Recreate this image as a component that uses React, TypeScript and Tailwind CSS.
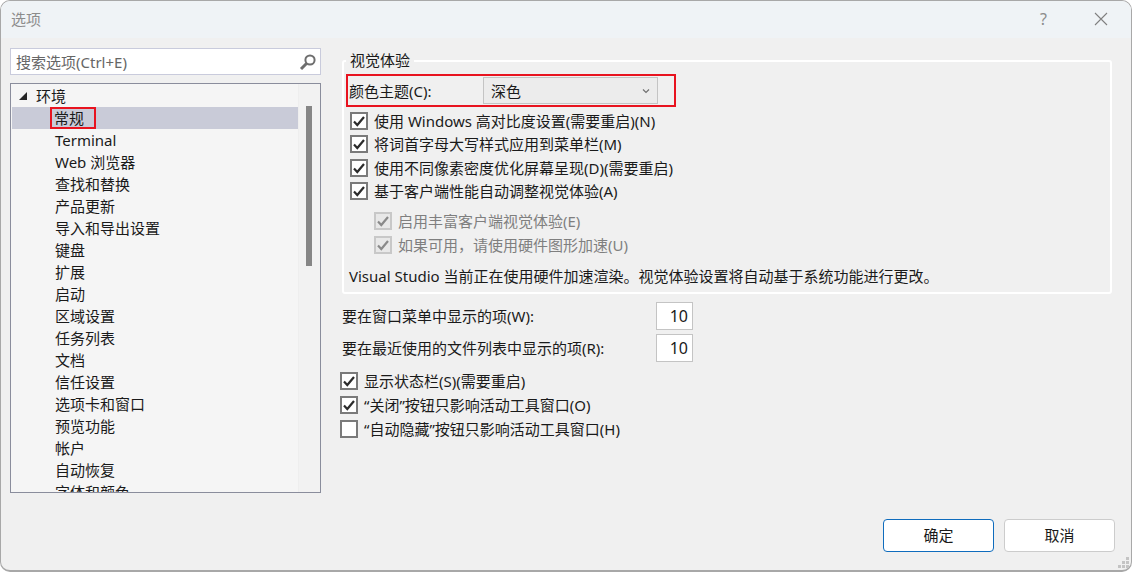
import React from "react";

const treeItems = ["Terminal", "Web 浏览器", "查找和替换", "产品更新", "导入和导出设置", "键盘", "扩展", "启动", "区域设置", "任务列表", "文档", "信任设置", "选项卡和窗口", "预览功能", "帐户", "自动恢复", "字体和颜色"];

function Check({ checked = true, disabled = false }: { checked?: boolean; disabled?: boolean }) {
  return (
    <span className={`flex h-[18px] w-[18px] shrink-0 items-center justify-center border-2 ${disabled ? "border-[#c8c8c8] bg-[#e8e8e8]" : "border-[#7a7a7a] bg-white"}`}>
      {checked && (
        <svg width="14" height="14" viewBox="0 0 14 14" fill="none">
          <path d="M2 7.5 L5.3 11 L12 3" stroke={disabled ? "#8a8a8a" : "#2b2b2b"} strokeWidth="2.2" />
        </svg>
      )}
    </span>
  );
}

function CheckRow({ label, checked = true, disabled = false, className = "" }: { label: string; checked?: boolean; disabled?: boolean; className?: string }) {
  return (
    <div className={`flex items-center gap-[6px] ${className}`}>
      <Check checked={checked} disabled={disabled} />
      <span className={disabled ? "text-[#7f7f7f]" : ""}>{label}</span>
    </div>
  );
}

function NumberRow({ label }: { label: string }) {
  return (
    <div className="flex h-[28px] items-center justify-between">
      <span>{label}</span>
      <span className="flex h-[28px] w-[37px] items-center justify-end border border-[#c4c4c4] bg-white pr-[4px] text-[16px]">10</span>
    </div>
  );
}

export default function App() {
  return (
    <div className="relative flex h-[572px] w-[1132px] flex-col overflow-hidden rounded-[10px] border border-b-2 border-[#a8a8a8] bg-[#f0f0f0] text-[15px] leading-[22px] text-[#1a1a1a] [font-family:'Noto_Sans','Noto_Sans_CJK_SC',sans-serif]">
      <div className="flex h-[37px] shrink-0 items-center justify-between bg-[#eff3f6] pb-[2px] pl-[10px] pr-[23px]">
        <span className="text-[#8c8c8c]">选项</span>
        <div className="flex items-center gap-[47px]">
          <span className="text-[16px] text-[#8c8c8c]">?</span>
          <svg width="14" height="14" viewBox="0 0 14 14" fill="none">
            <path d="M1 1 L13 13 M13 1 L1 13" stroke="#808080" strokeWidth="1.1" />
          </svg>
        </div>
      </div>

      <div className="flex flex-1 pl-[9px] pt-[10px]">
        <div className="flex w-[311px] shrink-0 flex-col gap-[8px]">
          <div className="flex h-[27px] items-center justify-between border border-[#c9cbdc] bg-white pl-[5px] pr-[3px] text-[#666]">
            <span>搜索选项(Ctrl+E)</span>
            <svg width="18" height="18" viewBox="0 0 18 18" fill="none">
              <circle cx="11" cy="7" r="4.6" stroke="#6e6e6e" strokeWidth="2" />
              <path d="M7.5 10.5 L2 16" stroke="#6e6e6e" strokeWidth="3" />
            </svg>
          </div>
          <div className="flex h-[410px] overflow-hidden border border-[#8a8d9c] bg-[#f5f5f5]">
            <div className="flex-1 overflow-hidden pl-px pt-[1px]">
              <div className="flex h-[22px] items-center pl-[7px]">
                <svg width="8" height="8" viewBox="0 0 8 8" className="mr-[9px]">
                  <path d="M8 0 V8 H0 Z" fill="#262626" />
                </svg>
                <span>环境</span>
              </div>
              <div className="flex h-[22px] items-center bg-[#c9cbd8] pl-[38px]">
                <span className="flex h-[22px] items-center border-2 border-[#e8131f] pl-[2px] pr-[10px] leading-none">常规</span>
              </div>
              {treeItems.map((t) => (
                <div key={t} className="flex h-[22px] items-center pl-[43px]">{t}</div>
              ))}
            </div>
            <div className="w-[22px] shrink-0 border-l border-[#eeeeee] bg-[#f2f2f2] pl-[7px] pt-[22px]">
              <div className="h-[160px] w-[6px] bg-[#868686]" />
            </div>
          </div>
        </div>

        <div className="ml-[21px] w-[770px] shrink-0 pt-[12px]">
          <div className="relative h-[234px] rounded-[3px] border-2 border-white px-[2px] pt-[12px]">
            <span className="absolute -top-[13px] left-[2px] bg-[#f0f0f0] px-[4px]">视觉体验</span>
            <div className="flex h-[33px] w-[330px] items-center justify-between border-2 border-[#e8131f] pl-[1px] pr-[16px]">
              <span>颜色主题(C):</span>
              <div className="flex h-[27px] w-[175px] items-center justify-between border border-[#c4c4c4] bg-[#ececec] pl-[7px] pr-[6px]">
                <span>深色</span>
                <svg width="10" height="10" viewBox="0 0 10 10" fill="none">
                  <path d="M2 3.5 L5 6.5 L8 3.5" stroke="#707070" strokeWidth="1.2" />
                </svg>
              </div>
            </div>
            <div className="mt-[2px] flex flex-col gap-[1.4px] pl-[4px] pt-[1px]">
              <CheckRow label="使用 Windows 高对比度设置(需要重启)(N)" />
              <CheckRow label="将词首字母大写样式应用到菜单栏(M)" />
              <CheckRow label="使用不同像素密度优化屏幕呈现(D)(需要重启)" />
              <CheckRow label="基于客户端性能自动调整视觉体验(A)" />
            </div>
            <div className="mt-[8px] flex flex-col gap-[2px] pl-[28px]">
              <CheckRow label="启用丰富客户端视觉体验(E)" disabled />
              <CheckRow label="如果可用，请使用硬件图形加速(U)" disabled />
            </div>
            <div className="mt-[9px] pl-[3px]">Visual Studio 当前正在使用硬件加速渲染。视觉体验设置将自动基于系统功能进行更改。</div>
          </div>

          <div className="mt-[8px] flex w-[351px] flex-col gap-[4px]">
            <NumberRow label="要在窗口菜单中显示的项(W):" />
            <NumberRow label="要在最近使用的文件列表中显示的项(R):" />
          </div>

          <div className="mt-[8px] flex flex-col gap-[2px]">
            <CheckRow label="显示状态栏(S)(需要重启)" className="-ml-[2px]" />
            <CheckRow label={"“关闭”按钮只影响活动工具窗口(O)"} className="-ml-[2px]" />
            <CheckRow label={"“自动隐藏”按钮只影响活动工具窗口(H)"} checked={false} className="-ml-[2px]" />
          </div>
        </div>
      </div>

      <div className="flex shrink-0 justify-end gap-[10px] pb-[18px] pr-[16px]">
        <button className="h-[33px] w-[111px] rounded-[4px] border border-[#0f6cbd] bg-white pb-[2px]">确定</button>
        <button className="h-[33px] w-[111px] rounded-[4px] border border-[#cccccc] bg-white pb-[2px]">取消</button>
      </div>

      <svg width="12" height="12" viewBox="0 0 12 12" className="absolute bottom-[1px] right-[1px]" fill="#c4c4c4">
        <rect x="8" y="0" width="3" height="3" />
        <rect x="4" y="4" width="3" height="3" />
        <rect x="8" y="4" width="3" height="3" />
        <rect x="0" y="8" width="3" height="3" />
        <rect x="4" y="8" width="3" height="3" />
        <rect x="8" y="8" width="3" height="3" />
      </svg>
    </div>
  );
}
